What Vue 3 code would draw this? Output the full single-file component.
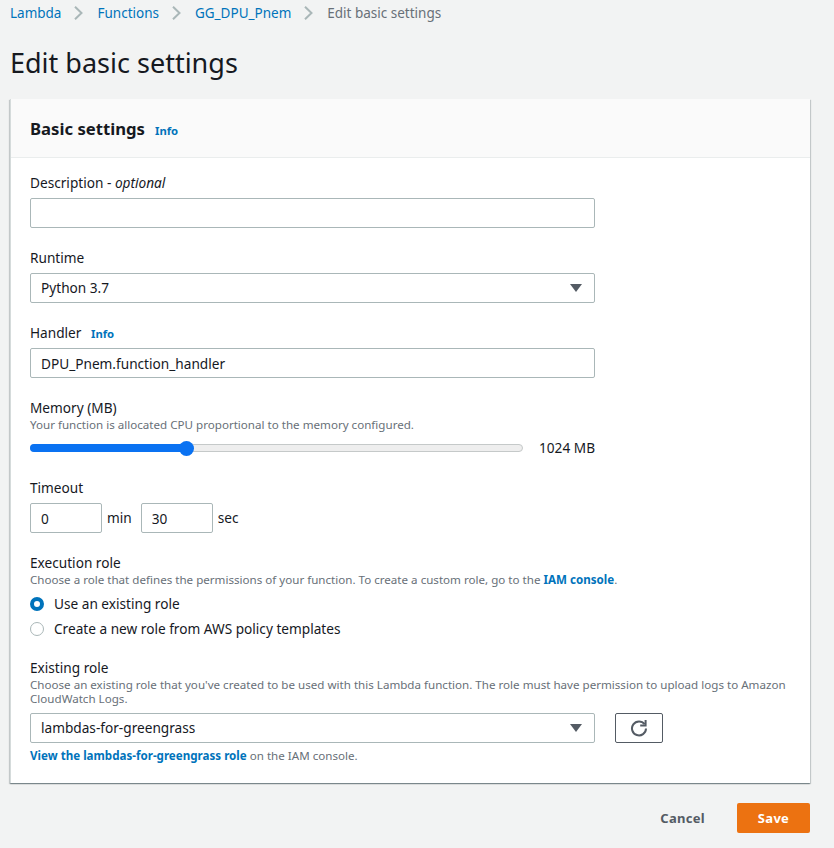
<script setup>
const crumbs = ['Lambda', 'Functions', 'GG_DPU_Pnem']
</script>

<template>
  <div class="page">
    <nav class="crumbs">
      <template v-for="c in crumbs" :key="c">
        <a class="crumb">{{ c }}</a>
        <svg class="sep" width="9" height="14" viewBox="0 0 9 14"><path d="M1 .7 L7.5 7 L1 13.3" fill="none" stroke="#aab7b8" stroke-width="2"/></svg>
      </template>
      <span class="current">Edit basic settings</span>
    </nav>
    <h1>Edit basic settings</h1>
    <section class="card">
      <header class="card-head">
        <h2>Basic settings</h2>
        <a class="info">Info</a>
      </header>
      <div class="card-body">
        <div class="field">
          <label>Description - <i>optional</i></label>
          <input class="input wide" type="text" value="" />
        </div>
        <div class="field">
          <label>Runtime</label>
          <div class="input wide select">
            <span>Python 3.7</span>
            <svg width="12" height="8" viewBox="0 0 12 8"><path d="M0 0H12L6 8Z" fill="#545b64"/></svg>
          </div>
        </div>
        <div class="field">
          <label>Handler <a class="info inline">Info</a></label>
          <input class="input wide" type="text" value="DPU_Pnem.function_handler" />
        </div>
        <div class="field">
          <label class="tight">Memory (MB)</label>
          <p class="help">Your function is allocated CPU proportional to the memory configured.</p>
          <div class="memory">
            <div class="track">
              <div class="fill" :style="{ width: '156px' }"></div>
              <div class="thumb" :style="{ left: '148px' }"></div>
            </div>
            <span>1024 MB</span>
          </div>
        </div>
        <div class="field">
          <label>Timeout</label>
          <div class="timeout">
            <input class="input short" type="text" value="0" />
            <span>min</span>
            <input class="input short" type="text" value="30" />
            <span>sec</span>
          </div>
        </div>
        <div class="field">
          <label class="tight">Execution role</label>
          <p class="help">Choose a role that defines the permissions of your function. To create a custom role, go to the <a class="strong">IAM console</a>.</p>
          <div class="radios">
            <div class="radio-row"><span class="radio on"></span>Use an existing role</div>
            <div class="radio-row"><span class="radio"></span>Create a new role from AWS policy templates</div>
          </div>
        </div>
        <div class="field role">
          <label class="tight">Existing role</label>
          <p class="help">Choose an existing role that you've created to be used with this Lambda function. The role must have permission to upload logs to Amazon CloudWatch Logs.</p>
          <div class="role-row">
            <div class="input wide select">
              <span>lambdas-for-greengrass</span>
              <svg width="12" height="8" viewBox="0 0 12 8"><path d="M0 0H12L6 8Z" fill="#545b64"/></svg>
            </div>
            <button class="refresh" type="button">
              <svg width="18" height="18" viewBox="0 0 18 18"><path d="M14.6 5.2A7 7 0 1 0 16 9.5" fill="none" stroke="#545b64" stroke-width="2"/><path d="M15.6 1V6.4H10.2" fill="none" stroke="#545b64" stroke-width="2"/></svg>
            </button>
          </div>
          <p class="help after"><a class="strong">View the lambdas-for-greengrass role</a> on the IAM console.</p>
        </div>
      </div>
    </section>
    <footer class="actions">
      <button class="cancel" type="button">Cancel</button>
      <button class="save" type="button">Save</button>
    </footer>
  </div>
</template>

<style>
html, body { margin: 0; background: #f2f3f3; }
</style>

<style scoped>
.page {
  width: 834px;
  height: 848px;
  box-sizing: border-box;
  padding: 0 24px 0 10px;
  background: #f2f3f3;
  font-family: "Noto Sans", sans-serif;
  font-size: 13.65px;
  line-height: 20px;
  color: #16191f;
  overflow: hidden;
}
.crumbs { display: flex; align-items: center; height: 26px; font-size: 13.5px; }
.crumb { color: #0073bb; }
.current { color: #687078; }
.sep { margin: 0 14px 0 13px; }
h1 { margin: 19px 0 18px; font-size: 27px; line-height: 36px; font-weight: 400; color: #16191f; }
.card {
  background: #fff;
  border-left: 1px solid #d5dbdb;
  box-shadow: 0 1px 1px 0 rgba(0,28,36,.3), 1px 1px 1px 0 rgba(0,28,36,.15), -1px 1px 1px 0 rgba(0,28,36,.15);
}
.card-head {
  display: flex;
  align-items: baseline;
  height: 59px;
  box-sizing: border-box;
  padding: 18px 19px 0;
  background: #fafafa;
  border-bottom: 1px solid #eaeded;
}
h2 { margin: 0; font-size: 16.7px; line-height: 24px; font-weight: 700; }
.info { margin-left: 10px; font-size: 11.3px; font-weight: 700; color: #0073bb; }
.info.inline { margin-left: 6px; }
.card-body { display: flex; flex-direction: column; gap: 20px; padding: 15px 19px 20px; }
label { display: block; margin-bottom: 5px; height: 20px; }
label.tight { margin-bottom: 0; }
.input {
  display: block;
  box-sizing: border-box;
  height: 30px;
  padding: 0 10px;
  background: #fff;
  border: 1px solid #aab7b8;
  border-radius: 2px;
  font: inherit;
  color: #16191f;
  outline: none;
}
.wide { width: 565px; }
.short { width: 72px; }
.select { display: flex; align-items: center; justify-content: space-between; padding-right: 12px; }
.help { margin: 0; font-size: 11.6px; line-height: 14px; color: #687078; }
.help.after { margin-top: 6px; }
.strong { font-weight: 700; color: #0073bb; }
.memory { display: flex; align-items: center; justify-content: space-between; width: 565px; height: 20px; margin-top: 6px; }
.track { position: relative; width: 493px; height: 8px; box-sizing: border-box; background: #eee; border: 1px solid #c5c9c9; border-radius: 4px; }
.fill { position: absolute; left: -1px; top: -1px; height: 8px; background: #0a72f2; border-radius: 4px 0 0 4px; }
.thumb { position: absolute; top: -4.5px; width: 15px; height: 15px; background: #0a72f2; border-radius: 50%; }
.timeout { display: flex; align-items: center; }
.timeout span { margin: 0 9px 0 5px; }
.timeout span:last-child { margin-right: 0; }
.radios { margin-top: 4px; }
.radio-row { display: flex; align-items: center; height: 25px; }
.radio { width: 14px; height: 14px; box-sizing: border-box; margin-right: 10px; border: 1px solid #aab7b8; border-radius: 50%; background: #fff; }
.radio.on { border: 4px solid #0073bb; }
.role { margin-top: -3px; }
.role-row { display: flex; gap: 20px; margin-top: 7px; }
.refresh {
  display: flex; align-items: center; justify-content: center;
  width: 48px; height: 30px; padding: 0;
  background: #fff; border: 1px solid #545b64; border-radius: 2px;
}
.actions { display: flex; justify-content: flex-end; align-items: center; gap: 32px; margin-top: 20px; }
.cancel, .save { font: inherit; font-weight: 700; font-size: 13px; border: none; letter-spacing: .3px; }
.cancel { padding: 0; background: none; color: #545b64; }
.save { width: 73px; height: 30px; padding: 0; background: #ec7211; color: #fff; border-radius: 2px; }
</style>
